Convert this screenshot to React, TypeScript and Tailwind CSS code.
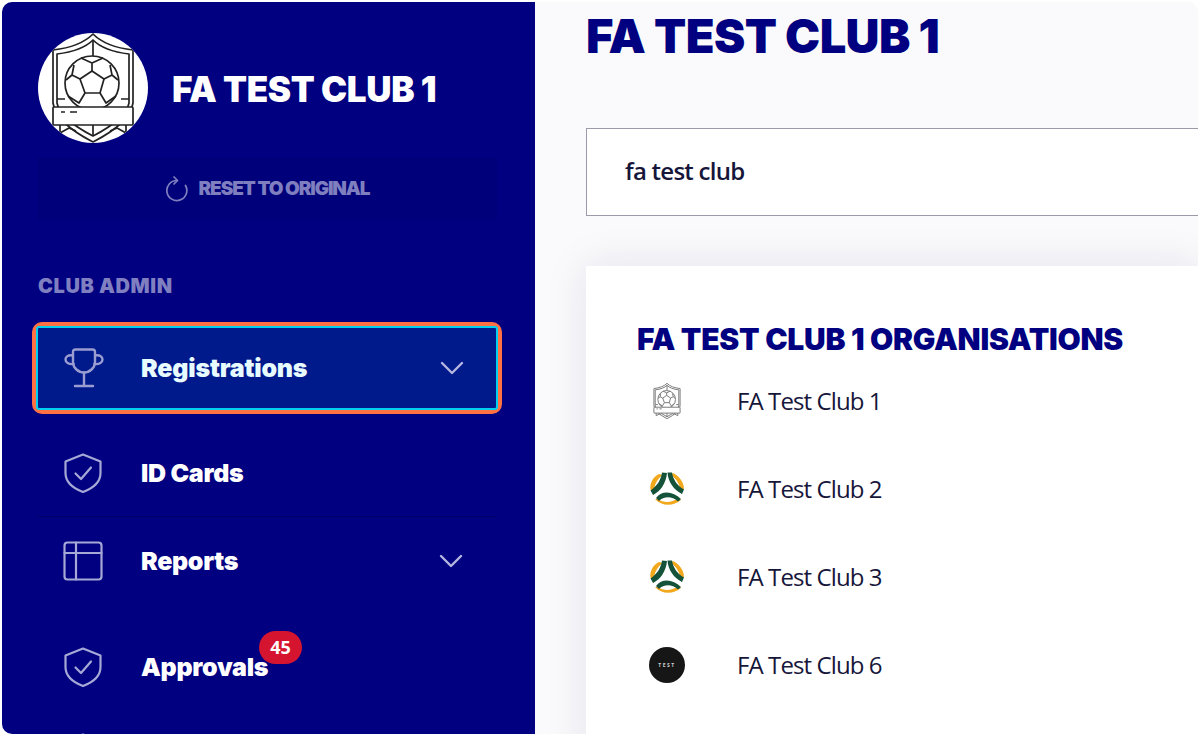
import React from "react";

function Crest({ color = "#222", weight = 1.7 }: { color?: string; weight?: number }) {
  return (
    <svg viewBox="0 0 110 110" fill="none" stroke={color} strokeWidth={weight} strokeLinejoin="round" className="w-full h-full">
      {/* shield */}
      <path d="M15 17 Q42 14 55 1 Q68 14 95 17 L95 70 Q92 90 55 109 Q18 90 15 70 Z" fill="#fff" />
      <path d="M19 21 Q44 18 55 7 Q66 18 91 21 L91 70 Q88 86 55 103 Q22 86 19 70 Z" />
      <path d="M55 7 V24 M55 90 V103 M19 66 H27 M83 66 H91" />
      {/* ball */}
      <circle cx="54" cy="50" r="27" fill="#fff" />
      <path d="M54 38 L66 46 L62 60 L47 60 L42 46 Z" />
      <path d="M54 38 V30 L43 25 M54 30 L65 25 M66 46 L74 42 L80 47 M74 42 L72 32 M62 60 L68 70 L78 63 M47 60 L41 70 L30 63 M42 46 L34 42 L28 47 M34 42 L36 32" />
      {/* ribbon */}
      <path d="M22 92 L22 100 L31 95 L38 98 M88 92 L88 100 L79 95 L72 98" fill="#fff" />
      <rect x="15" y="74" width="80" height="18" rx="1" fill="#fff" />
      <path d="M23 79 H27 M32 79 H39" />
    </svg>
  );
}

function FootballLogo() {
  return (
    <svg viewBox="0 0 36 36" fill="none" className="w-[36px] h-[36px]">
      <path d="M10 3 C4 6 0.5 12 1.5 19 L5 21 C5 14 8 8 14 4 Z" fill="#f2a81d" />
      <path d="M24 2 C30 5 35 11 35 18 L32 22 C31 14 28 8 22 4 Z" fill="#f2a81d" />
      <path d="M6 28 C12 35 24 36 32 29 L29 27 C23 32 14 32 9 28 Z" fill="#f2a81d" />
      <path d="M13 1.5 C12 9 8 15 1.5 19.5 L4 24 C12 20 17 12 18 2 Z" fill="#14523a" />
      <path d="M18.5 1.5 C19 11 25 19 33 23 L35 18.5 C28 15 24 8 23 1.5 Z" fill="#14523a" />
      <path d="M7 27 C13 19 24 20 32 28 L29 30.5 C23 25 15 25 10 30 Z" fill="#14523a" />
    </svg>
  );
}

function TestLogo() {
  return (
    <div className="w-[36px] h-[36px] rounded-full bg-[#161616] flex items-center justify-center">
      <span className="text-[5px] leading-none tracking-[1.5px] text-[#cfcfcf] font-bold">TEST</span>
    </div>
  );
}

function TrophyIcon() {
  return (
    <svg viewBox="0 0 40 40" fill="none" stroke="#9a9dd0" strokeWidth="2.4" strokeLinecap="round" strokeLinejoin="round" className="w-[40px] h-[40px]">
      <path d="M9 4 C9 2.5 10 1.5 11.5 1.5 H28.5 C30 1.5 31 2.5 31 4 V14 C31 20 25.500 24.500 20 24.500 C14.500 24.500 9 20 9 14 Z" />
      <path d="M9 7.500 C4.500 6.500 1.500 8.500 1.500 11.500 C1.500 14.500 4.500 16.500 9.500 16" />
      <path d="M31 7.500 C35.500 6.500 38.500 8.500 38.500 11.500 C38.500 14.500 35.500 16.500 30.500 16" />
      <path d="M20 24.500 V38 M11 38 H29" />
    </svg>
  );
}

function ShieldIcon() {
  return (
    <svg viewBox="0 0 40 40" fill="none" stroke="#a6a9d6" strokeWidth="2.2" strokeLinecap="round" strokeLinejoin="round" className="w-[40px] h-[40px]">
      <path d="M20 1.5 L37.5 8.5 V20 C37.5 30 28 36 20 39 C12 36 2.5 30 2.5 20 V8.5 Z" />
      <path d="M12.5 20.5 L18 26 L28 14.5" />
    </svg>
  );
}

function TableIcon() {
  return (
    <svg viewBox="0 0 40 40" fill="none" stroke="#a6a9d6" strokeWidth="2.2" strokeLinecap="round" strokeLinejoin="round" className="w-[40px] h-[40px]">
      <rect x="1.5" y="1.5" width="37" height="37" rx="3" />
      <path d="M1.5 12 H38.5 M13 1.5 V38.5" />
    </svg>
  );
}

function Chevron() {
  return (
    <svg viewBox="0 0 24 14" fill="none" stroke="#b4b6de" strokeWidth="2.4" strokeLinecap="round" strokeLinejoin="round" className="w-[24px] h-[14px]">
      <path d="M2 2 L12 12 L22 2" />
    </svg>
  );
}

function ResetIcon() {
  return (
    <svg viewBox="0 0 24 26" fill="none" stroke="#7f7fbf" strokeWidth="1.7" strokeLinecap="round" strokeLinejoin="round" className="w-[24px] h-[26px]">
      <path d="M12 4.5 A10 10 0 1 0 20.5 9.5" />
      <path d="M9 1 L12.5 4.5 L9 8" />
    </svg>
  );
}

const heavy = "font-['Inter',sans-serif] font-black";

function MenuItem({
  icon,
  label,
  chevron,
  badge,
  line,
  height = "h-[88px]",
}: {
  icon: React.ReactNode;
  label?: string;
  chevron?: boolean;
  badge?: string;
  line?: boolean;
  height?: string;
}) {
  return (
    <div className={`${height} flex items-center pl-[26px] pr-[34px] ${line ? "border-b border-[#00006a]" : ""}`}>
      <div className="w-[40px] flex justify-center">{icon}</div>
      <div className="relative ml-[38px] flex-1 pt-[2px]">
        <span className={`${heavy} text-white text-[25px] tracking-[-0.3px]`}>{label}</span>
        {badge && (
          <span className="absolute left-[118px] top-[-16px] w-[43px] h-[33px] rounded-full bg-[#d5152f] text-white flex items-center justify-center font-['Open_Sans',sans-serif] font-bold text-[18px]">
            {badge}
          </span>
        )}
      </div>
      {chevron && <Chevron />}
    </div>
  );
}

function OrgRow({ logo, name }: { logo: React.ReactNode; name: string }) {
  return (
    <div className="h-[88px] flex items-center">
      <div className="w-[36px] h-[36px] ml-[12px] flex items-center justify-center">{logo}</div>
      <span className="ml-[52px] font-['Open_Sans',sans-serif] text-[24px] font-medium text-[#16163a] tracking-[-0.9px]">{name}</span>
    </div>
  );
}

export default function App() {
  return (
    <div className="w-[1200px] h-[736px] bg-white p-[2px] overflow-hidden">
      <div className="w-full h-full flex rounded-[10px] overflow-hidden">
        <aside className="w-[533px] h-full shrink-0 bg-[#000080] overflow-hidden pl-[36px]">
          <div className="pt-[31px] flex items-center">
            <div className="w-[110px] h-[110px] rounded-full bg-white overflow-hidden">
              <Crest />
            </div>
            <h2 className={`${heavy} ml-[24px] pt-[2px] text-white text-[35px] leading-none tracking-[-0.35px]`}>FA TEST CLUB 1</h2>
          </div>
          <div className="mt-[14px] w-[460px] h-[63px] -ml-[1px] pt-[1px] bg-[#00007a] flex items-center justify-center gap-[10px]">
            <ResetIcon />
            <span className={`${heavy} text-[#7f7fbf] text-[19px] tracking-[-1.1px]`}>RESET TO ORIGINAL</span>
          </div>
          <div className={`${heavy} mt-[53px] mb-[-1px] text-[#8080c0] text-[20px] leading-[26px] tracking-[0.6px]`}>CLUB ADMIN</div>

          {/* active item has orange ring round a cyan border */}
          <div className="mt-[24px] -ml-[6px] w-[470px] h-[92px] rounded-[10px] border-[4px] border-[#ff7043]">
            <div className="h-full border-[2px] border-[#00d0f0] bg-[#001a8c] rounded-[3px] flex items-center pl-[26px] pr-[32px]">
              <div className="w-[40px] flex justify-center">
                <TrophyIcon />
              </div>
              <span className={`${heavy} ml-[37px] pt-[2px] flex-1 text-[#e8fbff] text-[25px] tracking-[-0.2px]`}>Registrations</span>
              <Chevron />
            </div>
          </div>

          <div className="-ml-[1px] w-[460px] mt-[15px]">
            <MenuItem icon={<ShieldIcon />} label="ID Cards" line />
            <MenuItem icon={<TableIcon />} label="Reports" chevron />
            <div className="h-[18px]" />
            <MenuItem icon={<ShieldIcon />} label="Approvals" badge="45" />
            <MenuItem icon={<ShieldIcon />} height="h-[84px]" />
          </div>
        </aside>

        <main className="flex-1 h-full bg-[#fafafc] pl-[51px] overflow-hidden">
          <h1 className={`${heavy} mt-[5px] text-[#000080] text-[47px] leading-[58px] tracking-[-0.6px] whitespace-nowrap`}>FA TEST CLUB 1</h1>
          <div className="mt-[63px] -mr-[20px] h-[88px] bg-white border border-[#9a9aa8] flex items-center pl-[38px]">
            <span className="font-['Open_Sans',sans-serif] font-semibold text-[24px] text-[#16163a] tracking-[-0.75px] -translate-y-[1px]">fa test club</span>
          </div>
          <section className="mt-[50px] h-[500px] bg-white shadow-[0_0_40px_rgba(30,30,90,0.1)] pl-[51px] pt-[55px]">
            <h3 className={`${heavy} text-[#000080] text-[30px] leading-[36px] tracking-[-0.25px] whitespace-nowrap`}>FA TEST CLUB 1 ORGANISATIONS</h3>
            <div>
              <OrgRow
                logo={
                  <div className="w-[36px] h-[36px] opacity-70">
                    <Crest color="#444" weight={3} />
                  </div>
                }
                name="FA Test Club 1"
              />
              <OrgRow logo={<FootballLogo />} name="FA Test Club 2" />
              <OrgRow logo={<FootballLogo />} name="FA Test Club 3" />
              <OrgRow logo={<TestLogo />} name="FA Test Club 6" />
            </div>
          </section>
        </main>
      </div>
    </div>
  );
}
